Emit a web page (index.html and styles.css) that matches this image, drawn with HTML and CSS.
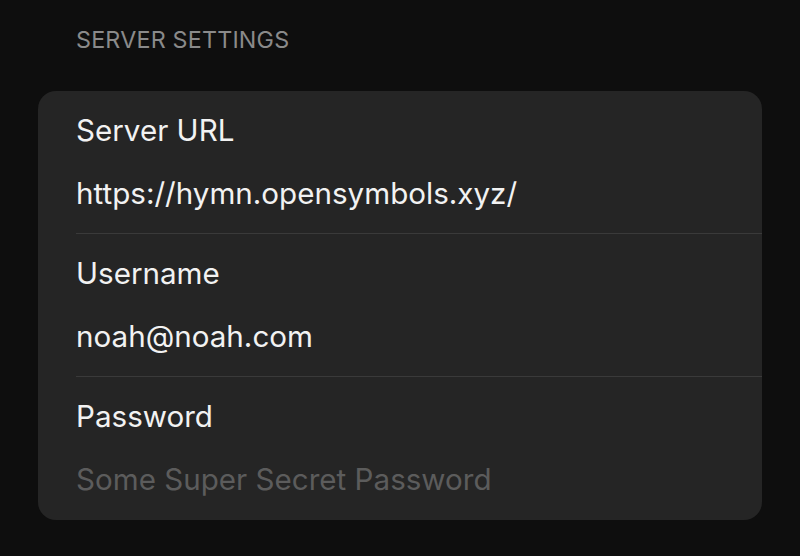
FILE: index.html
```html
<!DOCTYPE html>
<html>
<head>
<meta charset="utf-8">
<link rel="stylesheet" href="styles.css">
</head>
<body>
<div class="page">
  <div class="section-title">SERVER SETTINGS</div>
  <div class="card">
    <div class="row">
      <div class="label">Server URL</div>
      <div class="value">https://hymn.opensymbols.xyz/</div>
    </div>
    <div class="row">
      <div class="label">Username</div>
      <div class="value">noah@noah.com</div>
    </div>
    <div class="row last">
      <div class="label">Password</div>
      <div class="value placeholder">Some Super Secret Password</div>
    </div>
  </div>
</div>
</body>
</html>
```

FILE: styles.css
```css
html, body {
  margin: 0;
  padding: 0;
  background: #0e0e0e;
  width: 800px;
  height: 556px;
  overflow: hidden;
}
body {
  font-family: Inter, "Noto Sans", sans-serif;
  -webkit-font-smoothing: antialiased;
}
.page {
  padding: 25px 38px 0 38px;
}
.section-title {
  color: #8a8a8a;
  font-size: 23.3px;
  line-height: 30px;
  padding-left: 38px;
  letter-spacing: 0.2px;
}
.card {
  margin-top: 36px;
  background: #252525;
  border-radius: 18px;
  padding-left: 38px;
  overflow: hidden;
}
.row {
  height: 143px;
  border-bottom: 1px solid #3a3a3a;
  box-sizing: border-box;
  display: flex;
  flex-direction: column;
  padding-top: 20px;
}
.row.last {
  border-bottom: none;
}
.label, .value {
  color: #f2f2f2;
  font-size: 29.6px;
  line-height: 38px;
}
.value {
  margin-top: 25px;
}
.placeholder {
  color: #5c5c5c;
}
```
